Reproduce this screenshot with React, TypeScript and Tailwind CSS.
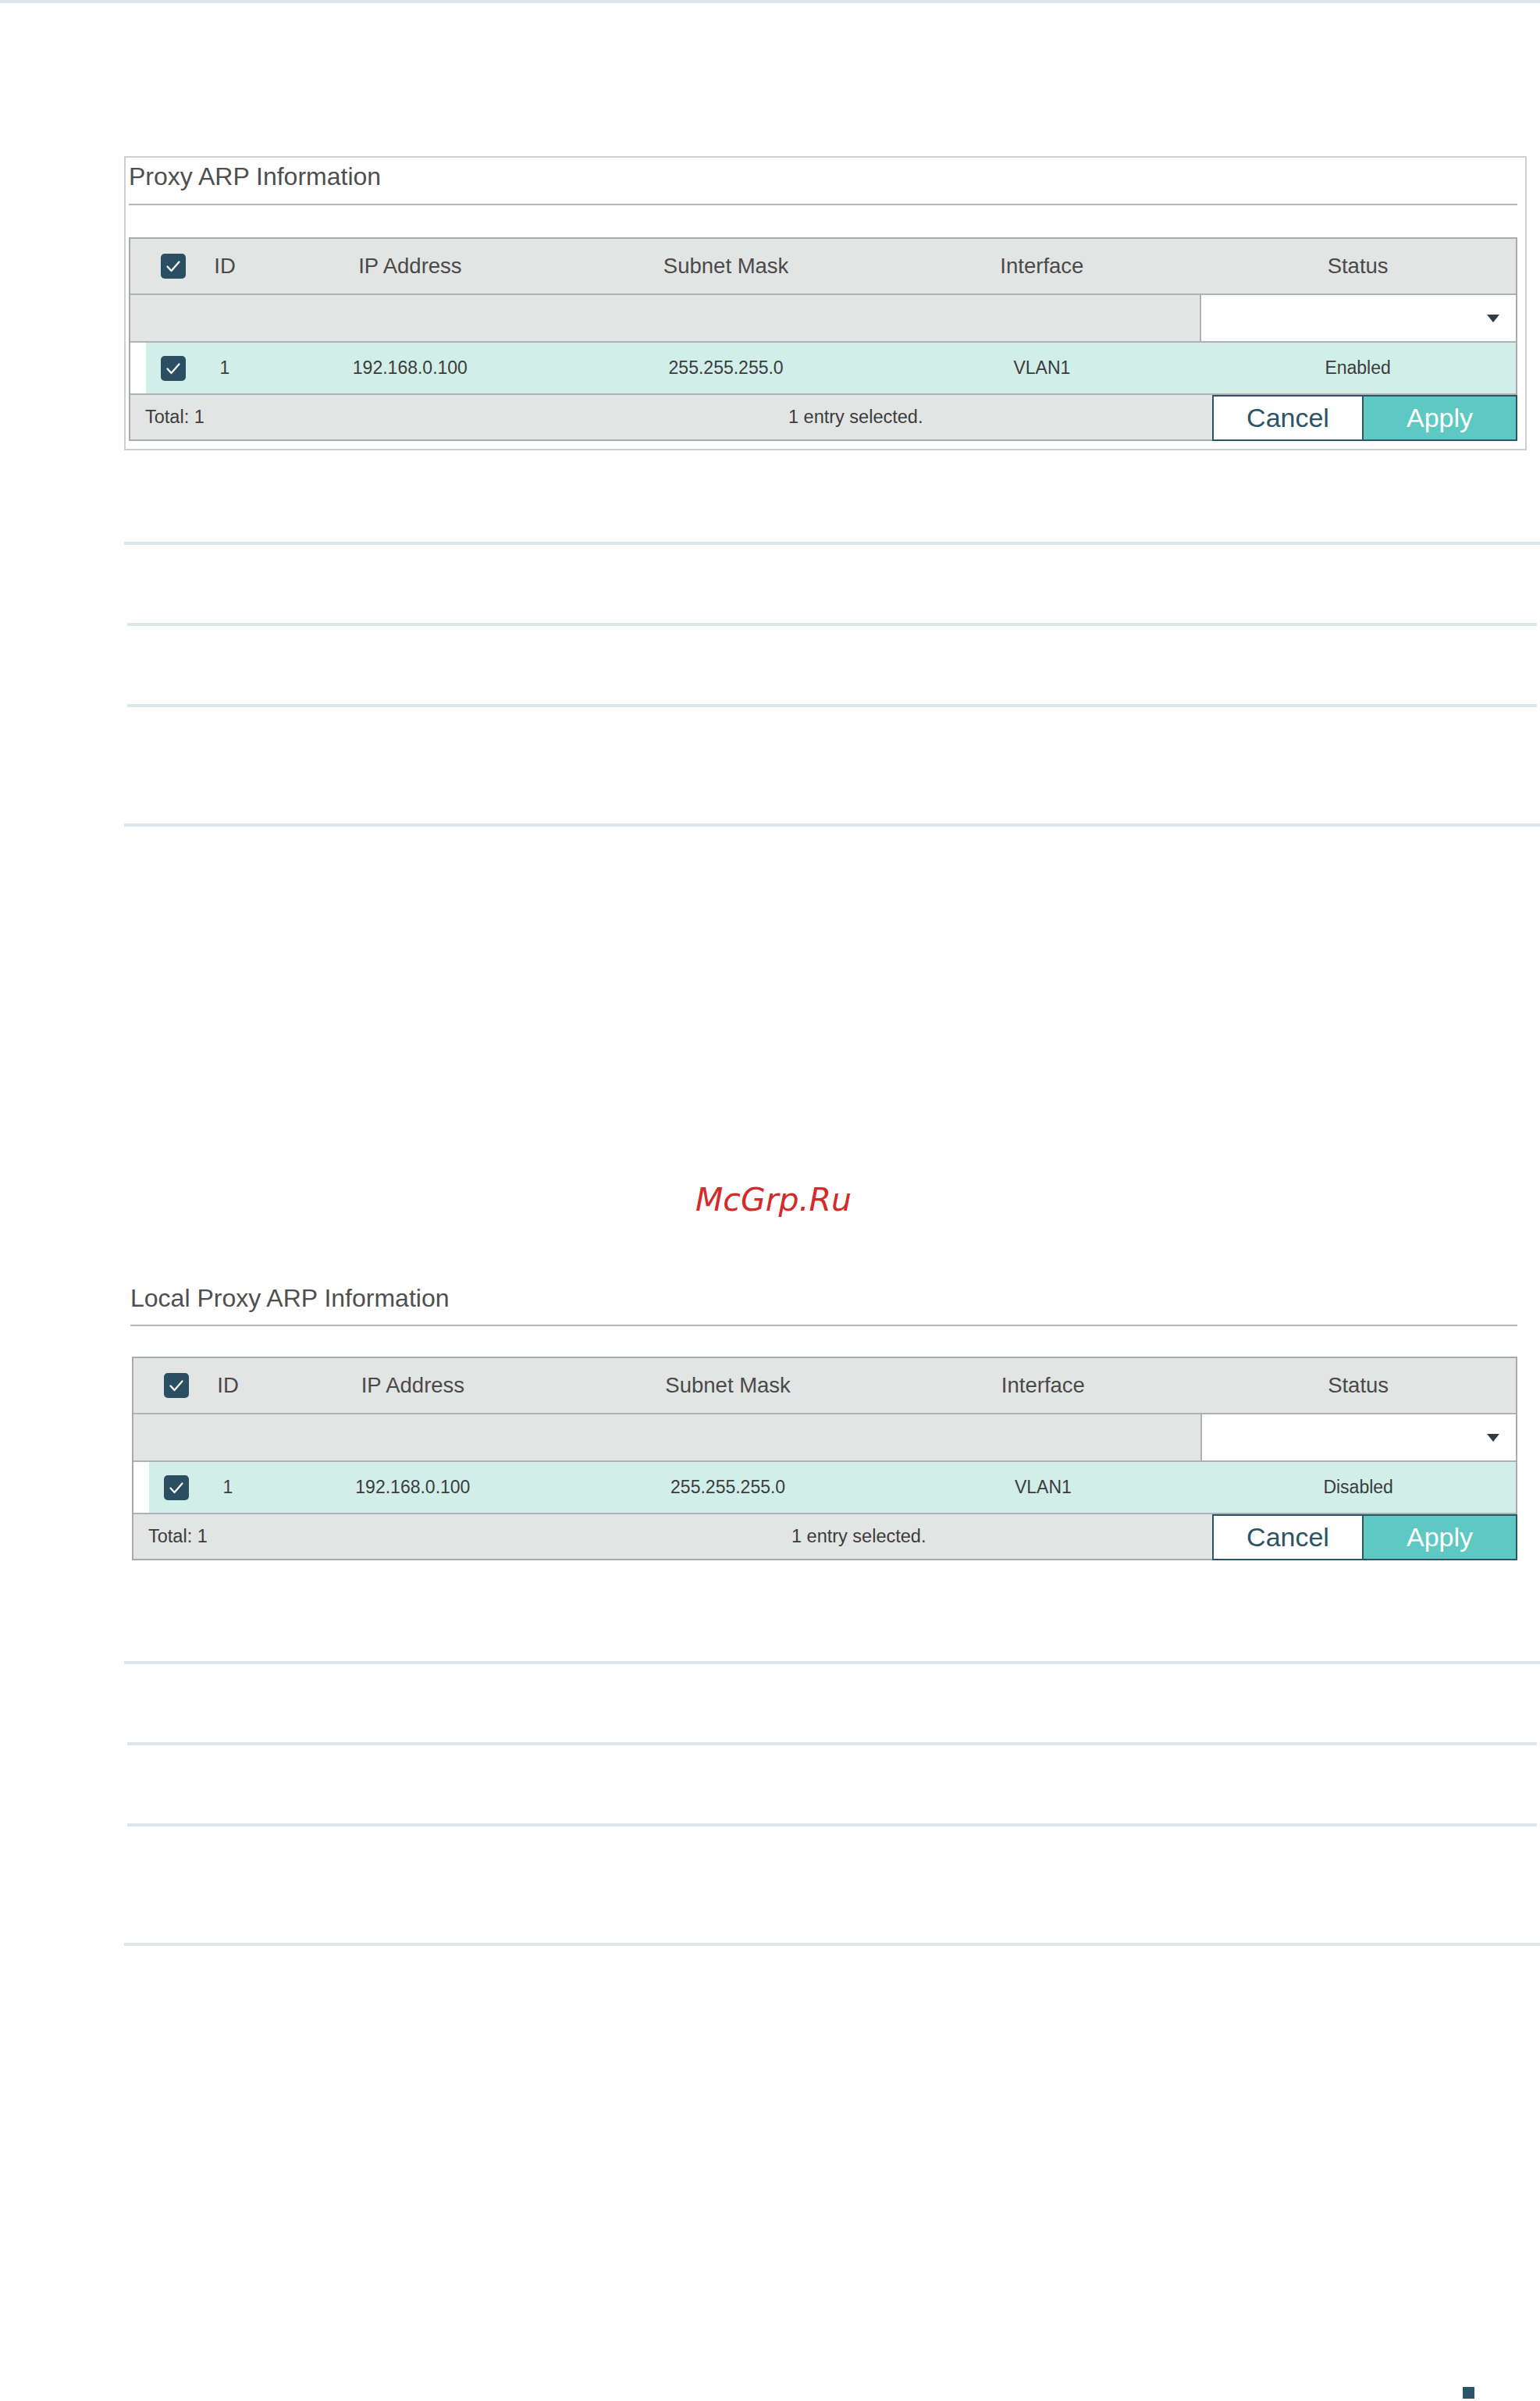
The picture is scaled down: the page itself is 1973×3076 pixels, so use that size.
import React from 'react';

function Check() {
  return (
    <span className="flex h-[32px] w-[32px] shrink-0 items-center justify-center rounded-[5px] bg-[#2b4f62]">
      <svg width="32" height="32" viewBox="0 0 32 32">
        <path d="M8.5 16.5l5 5.5 10-11.5" fill="none" stroke="#fff" strokeWidth="2.2" strokeLinecap="round" strokeLinejoin="round" />
      </svg>
    </span>
  );
}

function ArpTable({ status }: { status: string }) {
  const cols = 'grid grid-cols-[86px_70px_repeat(4,minmax(0,1fr))] items-center';
  return (
    <div className="border-2 border-[#a7abad]">
      <div className={`${cols} h-[72px] border-b-2 border-[#aeb2b4] bg-[#e2e5e4] text-[27.5px] text-[#4a4a4a]`}>
        <div className="pl-[39px]">
          <Check />
        </div>
        <div className="text-center">ID</div>
        <div className="text-center">IP Address</div>
        <div className="text-center">Subnet Mask</div>
        <div className="text-center">Interface</div>
        <div className="text-center">Status</div>
      </div>
      <div className={`${cols} h-[61px] border-b-2 border-[#aeb2b4] bg-[#e2e5e4]`}>
        <div className="col-start-6 flex h-full items-center justify-end border-l-2 border-[#aeb2b4] bg-white pr-[20px]">
          <svg width="18" height="12" viewBox="0 0 18 12">
            <path d="M1 1h16L9 11z" fill="#2f3c45" />
          </svg>
        </div>
      </div>
      <div className={`${cols} h-[67px] border-b-2 border-[#aeb2b4] bg-[#d1eee9] text-[23px] text-[#3c3c3c]`}>
        <div className="flex h-full items-center">
          <div className="h-full w-[20px] bg-white" />
          <div className="ml-[19px]">
            <Check />
          </div>
        </div>
        <div className="text-center">1</div>
        <div className="text-center">192.168.0.100</div>
        <div className="text-center">255.255.255.0</div>
        <div className="text-center">VLAN1</div>
        <div className="text-center">{status}</div>
      </div>
      <div className="flex h-[57px] bg-[#e2e5e4] text-[23.5px] text-[#3c3c3c]">
        <div className="flex w-[843px] items-center pl-[19px]">Total: 1</div>
        <div className="flex flex-1 items-center">1 entry selected.</div>
        <div className="-mr-[2px] flex h-[59px] text-[34px]">
          <button className="flex w-[194px] items-center justify-center border-2 border-[#2c5567] bg-white text-[#2d5366]">Cancel</button>
          <button className="flex w-[197px] items-center justify-center border-2 border-l-0 border-[#2c5567] bg-[#5ec8c3] text-white">Apply</button>
        </div>
      </div>
    </div>
  );
}

function Rules() {
  return (
    <div className="flex flex-col">
      <div className="ml-[159px] h-[4px] bg-[#dde7ea]" />
      <div className="ml-[163px] mr-[4px] mt-[100px] h-[4px] bg-[#dde7ea]" />
      <div className="ml-[163px] mr-[4px] mt-[100px] h-[4px] bg-[#dde7ea]" />
      <div className="ml-[159px] mt-[149px] h-[4px] bg-[#dde7ea]" />
    </div>
  );
}

export default function App() {
  return (
    <div className="flex h-[3076px] w-[1973px] flex-col overflow-hidden bg-white font-['Liberation_Sans',Arial,sans-serif]">
      <div className="h-[4px] bg-[#dde7eb]" />

      <div className="ml-[159px] mt-[196px] w-[1797px] border-2 border-[#cfcfcf] pb-[10px] pl-[4px] pr-[10px] pt-[4px]">
        <div className="h-[40px] text-[32px] leading-[40px] text-[#4f4f4f]">Proxy ARP Information</div>
        <div className="mt-[15px] h-[2px] bg-[#b5b8ba]" />
        <div className="mt-[41px]">
          <ArpTable status="Enabled" />
        </div>
      </div>

      <div className="mt-[117px]">
        <Rules />
      </div>

      <div className="mt-[454px] pl-[891px] font-['DejaVu_Sans',sans-serif] text-[41px] italic leading-[48px] text-[#d42a2a]">McGrp.Ru</div>

      <div className="ml-[167px] mt-[82px] w-[1777px]">
        <div className="h-[40px] text-[32px] leading-[40px] text-[#4f4f4f]">Local Proxy ARP Information</div>
        <div className="mt-[14px] h-[2px] bg-[#b5b8ba]" />
        <div className="ml-[2px] mt-[39px]">
          <ArpTable status="Disabled" />
        </div>
      </div>

      <div className="mt-[129px]">
        <Rules />
      </div>

      <div className="ml-[1874px] mt-[565px] h-[15px] w-[15px] bg-[#2b5468]" />
    </div>
  );
}
